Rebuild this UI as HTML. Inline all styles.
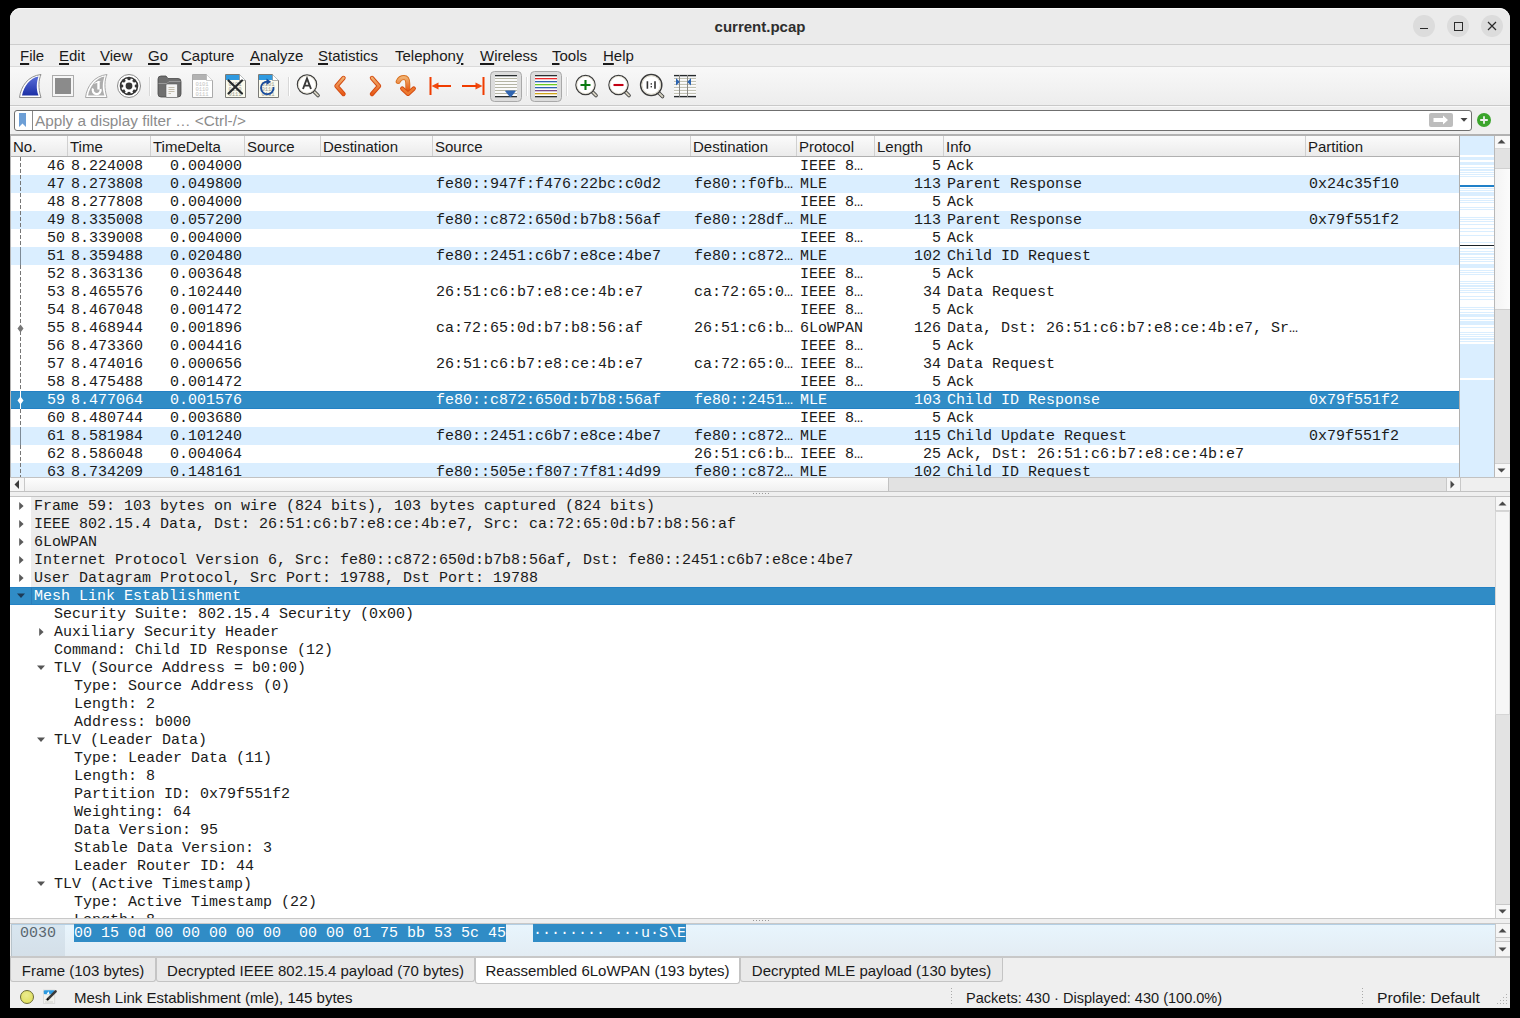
<!DOCTYPE html><html><head><meta charset='utf-8'><style>
*{box-sizing:border-box}
html,body{margin:0;padding:0}
body{width:1520px;height:1018px;background:#000;position:relative;overflow:hidden;font-family:"Liberation Sans",sans-serif;color:#1c1c1c}
.a{position:absolute}
.m{font-family:"Liberation Mono",monospace;font-size:15px;line-height:18px;white-space:pre;padding-top:1px}
.s{font-family:"Liberation Sans",sans-serif;font-size:15px;white-space:pre}
</style></head><body>
<div class='a' style='left:10px;top:8px;width:1500px;height:1000px;background:#efefef;border-radius:11px 11px 0 0;overflow:hidden'></div>
<div class='a' style='left:10px;top:8px;width:1500px;height:36px;background:#ebebeb;border-radius:11px 11px 0 0;border-top:1px solid #f8f8f8'></div>
<div class='a' style='left:10px;top:44px;width:1500px;height:1px;background:#cdcdcd'></div>
<div class='a s' style='left:10px;top:17px;width:1500px;text-align:center;font-weight:bold;font-size:15px;line-height:20px;color:#2e2e2e'>current.pcap</div>
<div class='a' style='left:1413px;top:15px;width:22px;height:22px;border-radius:50%;background:#dcdcdc'></div>
<div class='a' style='left:1447px;top:15px;width:22px;height:22px;border-radius:50%;background:#dcdcdc'></div>
<div class='a' style='left:1481px;top:15px;width:22px;height:22px;border-radius:50%;background:#dcdcdc'></div>
<div class='a' style='left:1420px;top:28px;width:8px;height:1.3px;background:#2a2a2a'></div>
<div class='a' style='left:1454px;top:22px;width:8.5px;height:8.5px;border:1.3px solid #2a2a2a'></div>
<svg class='a' style='left:1486px;top:20px' width='12' height='12'><path d='M2 2L10 10M10 2L2 10' stroke='#2a2a2a' stroke-width='1.2'/></svg>
<div class='a' style='left:10px;top:45px;width:1500px;height:21px;background:#efefef'></div>
<div class='a' style='left:10px;top:66px;width:1500px;height:1px;background:#dadada'></div>
<div class='a s' style='left:20px;top:46px;line-height:19px;color:#1a1a1a'><u style='text-decoration-thickness:2px;text-underline-offset:2px'>F</u>ile</div>
<div class='a s' style='left:59px;top:46px;line-height:19px;color:#1a1a1a'><u style='text-decoration-thickness:2px;text-underline-offset:2px'>E</u>dit</div>
<div class='a s' style='left:100px;top:46px;line-height:19px;color:#1a1a1a'><u style='text-decoration-thickness:2px;text-underline-offset:2px'>V</u>iew</div>
<div class='a s' style='left:148px;top:46px;line-height:19px;color:#1a1a1a'><u style='text-decoration-thickness:2px;text-underline-offset:2px'>G</u>o</div>
<div class='a s' style='left:181px;top:46px;line-height:19px;color:#1a1a1a'><u style='text-decoration-thickness:2px;text-underline-offset:2px'>C</u>apture</div>
<div class='a s' style='left:250px;top:46px;line-height:19px;color:#1a1a1a'><u style='text-decoration-thickness:2px;text-underline-offset:2px'>A</u>nalyze</div>
<div class='a s' style='left:318px;top:46px;line-height:19px;color:#1a1a1a'><u style='text-decoration-thickness:2px;text-underline-offset:2px'>S</u>tatistics</div>
<div class='a s' style='left:395px;top:46px;line-height:19px;color:#1a1a1a'>Telephon<u style='text-decoration-thickness:2px;text-underline-offset:2px'>y</u></div>
<div class='a s' style='left:480px;top:46px;line-height:19px;color:#1a1a1a'><u style='text-decoration-thickness:2px;text-underline-offset:2px'>W</u>ireless</div>
<div class='a s' style='left:552px;top:46px;line-height:19px;color:#1a1a1a'><u style='text-decoration-thickness:2px;text-underline-offset:2px'>T</u>ools</div>
<div class='a s' style='left:603px;top:46px;line-height:19px;color:#1a1a1a'><u style='text-decoration-thickness:2px;text-underline-offset:2px'>H</u>elp</div>
<div class='a' style='left:10px;top:67px;width:1500px;height:38px;background:linear-gradient(#f8f8f8,#ededed)'></div>
<div class='a' style='left:10px;top:105px;width:1500px;height:1px;background:#c9c9c9'></div>
<svg class='a' style='left:18px;top:73px;overflow:visible' width='24' height='26' viewBox='0 0 24 26'><defs>
<linearGradient id='gblue' x1='0' y1='0' x2='0' y2='1'><stop offset='0' stop-color='#5a6ed8'/><stop offset='1' stop-color='#1b2fa6'/></linearGradient>
<linearGradient id='gor' x1='0' y1='0' x2='0' y2='1'><stop offset='0' stop-color='#f0b070'/><stop offset='1' stop-color='#e85a18'/></linearGradient>
</defs><path d='M1.5 24.5 C3 13, 10 3, 23 1.5 C20.5 7, 20 15, 23 24.5 Z' fill='#fff' stroke='#8e8e8e' stroke-width='1'/><path d='M4 22.5 C6 13, 12 5, 20.5 3.5 C18.5 9, 18 16, 20.5 22.5 Z' fill='url(#gblue)'/></svg>
<svg class='a' style='left:52px;top:75px;overflow:visible' width='22' height='22' viewBox='0 0 22 22'><rect x='0.5' y='0.5' width='21' height='21' fill='#f6f6f6' stroke='#ababab'/><rect x='3' y='3' width='16' height='16' fill='#8b8b8b'/></svg>
<svg class='a' style='left:84px;top:73px;overflow:visible' width='24' height='26' viewBox='0 0 24 26'><path d='M1.5 24.5 C3 13, 10 3, 23 1.5 C20.5 7, 20 15, 23 24.5 Z' fill='#fff' stroke='#a8a8a8' stroke-width='1'/><path d='M4 22.5 C6 13, 12 5, 20.5 3.5 C18.5 9, 18 16, 20.5 22.5 Z' fill='#adadad'/><path d='M9 15.5 A4 4 0 1 0 16.5 16' fill='none' stroke='#fff' stroke-width='2.2'/><path d='M14.5 8 V16.5' stroke='#fff' stroke-width='2.4'/><path d='M9.5 11 L17.5 8.5 L12 9 Z' fill='#fff'/></svg>
<svg class='a' style='left:117px;top:74px;overflow:visible' width='24' height='24' viewBox='0 0 24 24'><circle cx='12' cy='12' r='11.5' fill='#fff' stroke='#8a8a8a' stroke-width='1'/><circle cx='12' cy='12' r='9.3' fill='#363636'/><circle cx='12' cy='12' r='5.9' fill='#fff'/><rect x='10.8' y='4.3' width='2.4' height='3' fill='#fff' transform='rotate(22.5 12 12)'/><rect x='10.8' y='4.3' width='2.4' height='3' fill='#fff' transform='rotate(67.5 12 12)'/><rect x='10.8' y='4.3' width='2.4' height='3' fill='#fff' transform='rotate(112.5 12 12)'/><rect x='10.8' y='4.3' width='2.4' height='3' fill='#fff' transform='rotate(157.5 12 12)'/><rect x='10.8' y='4.3' width='2.4' height='3' fill='#fff' transform='rotate(202.5 12 12)'/><rect x='10.8' y='4.3' width='2.4' height='3' fill='#fff' transform='rotate(247.5 12 12)'/><rect x='10.8' y='4.3' width='2.4' height='3' fill='#fff' transform='rotate(292.5 12 12)'/><rect x='10.8' y='4.3' width='2.4' height='3' fill='#fff' transform='rotate(337.5 12 12)'/><circle cx='12' cy='12' r='3.4' fill='#363636'/></svg>
<div class='a' style='left:149px;top:77px;width:1px;height:19px;background:#d8d8d8;box-shadow:1px 0 0 #fff'></div>
<svg class='a' style='left:157px;top:75px;overflow:visible' width='25' height='23' viewBox='0 0 25 23'><path d='M1 4 Q1 1 4 1 H9 L11 3.5 H21 Q24 3.5 24 6.5 V19 Q24 22 21 22 H4 Q1 22 1 19 Z' fill='#6f6f6f' stroke='#4a4a4a' stroke-width='0.8'/><path d='M1.5 8.5 H10 L12 6.5 H23.5' fill='none' stroke='#9a9a9a' stroke-width='1'/><rect x='9' y='9' width='11.5' height='13.5' rx='1' fill='#f4f4f4' stroke='#5a5a5a' stroke-width='0.6'/><path d='M11.5 12.5H17.5M11.5 14.5H17.5M11.5 16.5H17.5M11.5 18.5H14' stroke='#b8b09a' stroke-width='0.8'/></svg>
<svg class='a' style='left:192px;top:74px;overflow:visible' width='21' height='24' viewBox='0 0 21 24'><path d='M0.5 0.5 H14.5 L20.5 6.5 V23.5 H0.5 Z' fill='#fff' stroke='#aaa'/><path d='M1 1 H14.3 L19.5 6 H1 Z' fill='#b3b3b3'/><path d='M14.5 0.5 V6.5 H20.5' fill='#fff' stroke='#aaa' stroke-width='0.6'/><text x='10' y='11.5' font-family='Liberation Mono' font-size='5.5' text-anchor='middle' fill='#c4c4c4'>0101</text><text x='10' y='16.5' font-family='Liberation Mono' font-size='5.5' text-anchor='middle' fill='#c4c4c4'>0110</text><text x='10' y='21.5' font-family='Liberation Mono' font-size='5.5' text-anchor='middle' fill='#c4c4c4'>0111</text></svg>
<svg class='a' style='left:225px;top:74px;overflow:visible' width='21' height='24' viewBox='0 0 21 24'><path d='M0.5 0.5 H14.5 L20.5 6.5 V23.5 H0.5 Z' fill='#fbfbee' stroke='#7a7a76'/><path d='M1 1 H14.3 L19.5 6 H1 Z' fill='#2f9ae0'/><path d='M14.5 0.5 V6.5 H20.5' fill='#fff' stroke='#7a7a76' stroke-width='0.6'/><text x='10' y='11.5' font-family='Liberation Mono' font-size='5.5' text-anchor='middle' fill='#9a9a90'>0101</text><text x='10' y='16.5' font-family='Liberation Mono' font-size='5.5' text-anchor='middle' fill='#9a9a90'>0110</text><text x='10' y='21.5' font-family='Liberation Mono' font-size='5.5' text-anchor='middle' fill='#9a9a90'>0111</text><path d='M3.5 6.5 L17 19.5 M17 6.5 L3.5 19.5' stroke='#262a2c' stroke-width='2.2' stroke-linecap='round'/></svg>
<svg class='a' style='left:258px;top:74px;overflow:visible' width='21' height='24' viewBox='0 0 21 24'><path d='M0.5 0.5 H14.5 L20.5 6.5 V23.5 H0.5 Z' fill='#fbfbee' stroke='#7a7a76'/><path d='M1 1 H14.3 L19.5 6 H1 Z' fill='#2f9ae0'/><path d='M14.5 0.5 V6.5 H20.5' fill='#fff' stroke='#7a7a76' stroke-width='0.6'/><text x='10' y='11.5' font-family='Liberation Mono' font-size='5.5' text-anchor='middle' fill='#9a9a90'>0101</text><text x='10' y='16.5' font-family='Liberation Mono' font-size='5.5' text-anchor='middle' fill='#9a9a90'>0110</text><text x='10' y='21.5' font-family='Liberation Mono' font-size='5.5' text-anchor='middle' fill='#9a9a90'>0111</text><path d='M15.5 13 A6.3 6.3 0 1 1 9.5 7.6' fill='none' stroke='#1a4c9c' stroke-width='1.8'/><path d='M8.5 4.5 L13 7.8 L8.5 11 Z' fill='#1a4c9c'/></svg>
<div class='a' style='left:288px;top:77px;width:1px;height:19px;background:#d8d8d8;box-shadow:1px 0 0 #fff'></div>
<svg class='a' style='left:296px;top:73px;overflow:visible' width='25' height='25' viewBox='0 0 25 25'><path d='M15.5 16 L22 22.5' stroke='#3c3c3c' stroke-width='3.6' stroke-linecap='round'/><path d='M15.5 16 L22 22.5' stroke='#d4d0c0' stroke-width='1.8' stroke-linecap='round'/><circle cx='11' cy='11.5' r='9.6' fill='#fff' stroke='#3c3c3c' stroke-width='1.3'/><circle cx='11' cy='11.5' r='8.6' fill='none' stroke='#e0dccb' stroke-width='0.8'/><path d='M7 16 L11 5.5 L15 16 M8.3 12.6 H13.7' fill='none' stroke='#3a3a3a' stroke-width='1.9'/></svg>
<svg class='a' style='left:332px;top:75px;overflow:visible' width='16' height='22' viewBox='0 0 16 22'><path d='M11.5 3 L4.5 11 L11.5 19' fill='none' stroke='#d44a10' stroke-width='4.4' stroke-linecap='round' stroke-linejoin='round'/><path d='M11.5 3 L4.5 11 L11.5 19' fill='none' stroke='url(#gor)' stroke-width='2.6' stroke-linecap='round' stroke-linejoin='round'/></svg>
<svg class='a' style='left:367px;top:75px;overflow:visible' width='16' height='22' viewBox='0 0 16 22'><path d='M5 3 L12 11 L5 19' fill='none' stroke='#d44a10' stroke-width='4.4' stroke-linecap='round' stroke-linejoin='round'/><path d='M5 3 L12 11 L5 19' fill='none' stroke='url(#gor)' stroke-width='2.6' stroke-linecap='round' stroke-linejoin='round'/></svg>
<svg class='a' style='left:395px;top:74px;overflow:visible' width='23' height='23' viewBox='0 0 23 23'><path d='M3.2 7.5 Q5 3.6 9 3.6 Q12.8 3.6 12.8 10 V16' fill='none' stroke='#d8701e' stroke-width='5' stroke-linecap='round'/><path d='M3.2 7.5 Q5 3.6 9 3.6 Q12.8 3.6 12.8 10 V16' fill='none' stroke='url(#gor)' stroke-width='3.2' stroke-linecap='round'/><path d='M7.3 14.6 L13 19.8 L18.7 14.6' fill='none' stroke='#d44a10' stroke-width='4.4' stroke-linecap='round' stroke-linejoin='round'/><path d='M7.3 14.6 L13 19.8 L18.7 14.6' fill='none' stroke='#ec7a30' stroke-width='2.6' stroke-linecap='round' stroke-linejoin='round'/></svg>
<svg class='a' style='left:428px;top:76px;overflow:visible' width='26' height='20' viewBox='0 0 26 20'><rect x='1.5' y='1' width='2' height='18' fill='#f03c00'/><path d='M3.5 10 L10.5 6.5 V13.5 Z' fill='#f04a10'/><rect x='9' y='9' width='14' height='2' fill='#f03c00'/></svg>
<svg class='a' style='left:460px;top:76px;overflow:visible' width='26' height='20' viewBox='0 0 26 20'><rect x='22.5' y='1' width='2' height='18' fill='#f03c00'/><path d='M22.5 10 L15.5 6.5 V13.5 Z' fill='#f04a10'/><rect x='2' y='9' width='15' height='2' fill='#f03c00'/></svg>
<svg class='a' style='left:490px;top:71px;overflow:visible' width='32' height='31' viewBox='0 0 32 31'><rect x='0.5' y='0.5' width='31' height='30' rx='4' fill='#dcdcdc' stroke='#a9a9a9'/><rect x='5' y='4' width='22' height='22' fill='#fafafa'/><rect x='5' y='4' width='22' height='1.3' fill='#2a2e30'/><rect x='5' y='7' width='22' height='1' fill='#b4b4a4'/><rect x='5' y='10' width='22' height='1' fill='#b4b4a4'/><rect x='5' y='13' width='22' height='1' fill='#b4b4a4'/><rect x='5' y='16' width='22' height='1' fill='#b4b4a4'/><rect x='5' y='19' width='22' height='1' fill='#b4b4a4'/><rect x='5' y='22' width='22' height='1' fill='#b4b4a4'/><rect x='5' y='25' width='22' height='1.3' fill='#2a2e30'/><path d='M15 20 Q15 19.5 16 19.5 H25 Q26 19.5 25.5 20.5 L21.5 25.5 Q20.5 26.5 19.5 25.5 Z' fill='#2f64b0'/></svg>
<div class='a' style='left:526px;top:77px;width:1px;height:19px;background:#d8d8d8;box-shadow:1px 0 0 #fff'></div>
<svg class='a' style='left:530px;top:71px;overflow:visible' width='32' height='31' viewBox='0 0 32 31'><rect x='0.5' y='0.5' width='31' height='30' rx='4' fill='#dcdcdc' stroke='#a9a9a9'/><rect x='5' y='4' width='22' height='22' fill='#fcfcfc'/><rect x='5' y='4' width='22' height='1.3' fill='#2a2e30'/><rect x='5' y='7' width='22' height='1.3' fill='#e82828'/><rect x='5' y='10' width='22' height='1.3' fill='#3064b0'/><rect x='5' y='13' width='22' height='1.3' fill='#6ccc20'/><rect x='5' y='16' width='22' height='1.3' fill='#3064b0'/><rect x='5' y='19' width='22' height='1.3' fill='#7a4a88'/><rect x='5' y='22' width='22' height='1.3' fill='#d0a418'/><rect x='5' y='25' width='22' height='1.3' fill='#2a2e30'/></svg>
<div class='a' style='left:566px;top:77px;width:1px;height:19px;background:#d8d8d8;box-shadow:1px 0 0 #fff'></div>
<svg class='a' style='left:575px;top:74px;overflow:visible' width='24' height='25' viewBox='0 0 24 25'><path d='M16.0 16.5 L21.0 21.5' stroke='#3c3c3c' stroke-width='3.6' stroke-linecap='round'/><path d='M16.0 16.5 L21.0 21.5' stroke='#d4d0c0' stroke-width='1.8' stroke-linecap='round'/><circle cx='10.5' cy='11' r='9.6' fill='#fff' stroke='#3c3c3c' stroke-width='1.3'/><circle cx='10.5' cy='11' r='8.6' fill='none' stroke='#e0dccb' stroke-width='0.8'/><path d='M5.5 11 H15.5 M10.5 6 V16' stroke='#0a7a12' stroke-width='2.1'/></svg>
<svg class='a' style='left:608px;top:74px;overflow:visible' width='24' height='25' viewBox='0 0 24 25'><path d='M16.0 16.5 L21.0 21.5' stroke='#3c3c3c' stroke-width='3.6' stroke-linecap='round'/><path d='M16.0 16.5 L21.0 21.5' stroke='#d4d0c0' stroke-width='1.8' stroke-linecap='round'/><circle cx='10.5' cy='11' r='9.6' fill='#fff' stroke='#3c3c3c' stroke-width='1.3'/><circle cx='10.5' cy='11' r='8.6' fill='none' stroke='#e0dccb' stroke-width='0.8'/><path d='M5.5 11 H15.5' stroke='#c40012' stroke-width='2.1'/></svg>
<svg class='a' style='left:639px;top:73px;overflow:visible' width='26' height='26' viewBox='0 0 26 26'><path d='M18 18 L23.5 23.5' stroke='#3c3c3c' stroke-width='3.6' stroke-linecap='round'/><path d='M18 18 L23.5 23.5' stroke='#d4d0c0' stroke-width='1.8' stroke-linecap='round'/><circle cx='12.2' cy='12' r='10.6' fill='#fff' stroke='#3c3c3c' stroke-width='1.5'/><circle cx='12.2' cy='12' r='9.3' fill='none' stroke='#d8d4c4' stroke-width='1'/><path d='M8.4 8.2 V15.8 M16 8.2 V15.8' stroke='#333' stroke-width='1.6'/><rect x='11.6' y='10.2' width='1.4' height='1.4' fill='#333'/><rect x='11.6' y='13' width='1.4' height='1.4' fill='#333'/></svg>
<svg class='a' style='left:674px;top:74px;overflow:visible' width='22' height='24' viewBox='0 0 22 24'><rect x='0' y='1' width='22' height='22' fill='#fcfcfc'/><rect x='0' y='0.9' width='22' height='1.4' fill='#262a2c'/><rect x='0' y='3.9' width='22' height='1' fill='#bcbcac'/><rect x='0' y='6.9' width='22' height='1' fill='#bcbcac'/><rect x='0' y='9.9' width='22' height='1' fill='#bcbcac'/><rect x='0' y='12.9' width='22' height='1' fill='#bcbcac'/><rect x='0' y='15.9' width='22' height='1' fill='#bcbcac'/><rect x='0' y='18.9' width='22' height='1' fill='#bcbcac'/><rect x='0' y='21.9' width='22' height='1.4' fill='#262a2c'/><rect x='5' y='1' width='1' height='22' fill='#8a8a86'/><rect x='13' y='1' width='1' height='22' fill='#8a8a86'/><path d='M2 4 L5.8 8 L2 11.5 Z' fill='#2d64b0'/><path d='M17 4 L13.2 8 L17 11.5 Z' fill='#2d64b0'/></svg>
<div class='a' style='left:14px;top:110px;width:1458px;height:21px;background:#fff;border:1px solid #6f6f6f;border-radius:3px'></div>
<div class='a' style='left:32px;top:111px;width:1px;height:19px;background:#8a8a8a'></div>
<svg class='a' style='left:18px;top:113px' width='10' height='15'><path d='M1 0H8V14L4.5 10.5L1 14Z' fill='#6d9fd6'/></svg>
<div class='a s' style='left:35px;top:111px;line-height:19px;color:#8c8c8c;font-size:15.3px'>Apply a display filter … &lt;Ctrl-/&gt;</div>
<div class='a' style='left:1429px;top:113px;width:24px;height:14px;background:#bdbdbd;border-radius:2px'></div>
<svg class='a' style='left:1433px;top:114px' width='18' height='12'><path d='M0.5 4H10V1.5L15 6L10 10.5V8H0.5Z' fill='#fff'/></svg>
<svg class='a' style='left:1460px;top:118px' width='10' height='6'><path d='M0.5 0H7.5L4 3.8Z' fill='#444'/></svg>
<div class='a' style='left:1477px;top:113px;width:14px;height:14px;border-radius:50%;background:#3ba52c'></div>
<svg class='a' style='left:1477px;top:113px' width='14' height='14'><path d='M7 3.2V10.8M3.2 7H10.8' stroke='#f0f0f0' stroke-width='1.8'/></svg>
<div class='a' style='left:10px;top:134px;width:1500px;height:2px;background:#b2b2b2'></div>
<div class='a' style='left:10px;top:106px;width:1500px;height:1px;background:#f8f8f8'></div>
<div class='a' style='left:10px;top:136px;width:1450px;height:341px;background:#fff'></div>
<div class='a' style='left:10px;top:136px;width:1450px;height:20px;background:linear-gradient(#fbfbfb,#ebebeb)'></div>
<div class='a' style='left:10px;top:156px;width:1450px;height:1px;background:#b0b0b0'></div>
<div class='a s' style='left:13px;top:137px;line-height:19px;color:#1a1a1a'>No.</div>
<div class='a' style='left:67px;top:136px;width:1px;height:20px;background:#d0d0d0'></div>
<div class='a s' style='left:70px;top:137px;line-height:19px;color:#1a1a1a'>Time</div>
<div class='a' style='left:150px;top:136px;width:1px;height:20px;background:#d0d0d0'></div>
<div class='a s' style='left:153px;top:137px;line-height:19px;color:#1a1a1a'>TimeDelta</div>
<div class='a' style='left:244px;top:136px;width:1px;height:20px;background:#d0d0d0'></div>
<div class='a s' style='left:247px;top:137px;line-height:19px;color:#1a1a1a'>Source</div>
<div class='a' style='left:320px;top:136px;width:1px;height:20px;background:#d0d0d0'></div>
<div class='a s' style='left:323px;top:137px;line-height:19px;color:#1a1a1a'>Destination</div>
<div class='a' style='left:432px;top:136px;width:1px;height:20px;background:#d0d0d0'></div>
<div class='a s' style='left:435px;top:137px;line-height:19px;color:#1a1a1a'>Source</div>
<div class='a' style='left:690px;top:136px;width:1px;height:20px;background:#d0d0d0'></div>
<div class='a s' style='left:693px;top:137px;line-height:19px;color:#1a1a1a'>Destination</div>
<div class='a' style='left:796px;top:136px;width:1px;height:20px;background:#d0d0d0'></div>
<div class='a s' style='left:799px;top:137px;line-height:19px;color:#1a1a1a'>Protocol</div>
<div class='a' style='left:874px;top:136px;width:1px;height:20px;background:#d0d0d0'></div>
<div class='a s' style='left:877px;top:137px;line-height:19px;color:#1a1a1a'>Length</div>
<div class='a' style='left:943px;top:136px;width:1px;height:20px;background:#d0d0d0'></div>
<div class='a s' style='left:946px;top:137px;line-height:19px;color:#1a1a1a'>Info</div>
<div class='a' style='left:1305px;top:136px;width:1px;height:20px;background:#d0d0d0'></div>
<div class='a s' style='left:1308px;top:137px;line-height:19px;color:#1a1a1a'>Partition</div>
<div class='a' style='left:10px;top:157px;width:1450px;height:320px;overflow:hidden'>
<div class='a m' style='left:0px;top:0px;width:55px;text-align:right;color:#1a1a1a'>46</div>
<div class='a m' style='left:61px;top:0px;color:#1a1a1a'>8.224008</div>
<div class='a m' style='left:140px;top:0px;width:92px;text-align:right;color:#1a1a1a'>0.004000</div>
<div class='a m' style='left:790px;top:0px;color:#1a1a1a'>IEEE 8…</div>
<div class='a m' style='left:864px;top:0px;width:67px;text-align:right;color:#1a1a1a'>5</div>
<div class='a m' style='left:937px;top:0px;color:#1a1a1a'>Ack</div>
<div class='a' style='left:0;top:18px;width:1450px;height:18px;background:#daeeff;'></div>
<div class='a m' style='left:0px;top:18px;width:55px;text-align:right;color:#1a1a1a'>47</div>
<div class='a m' style='left:61px;top:18px;color:#1a1a1a'>8.273808</div>
<div class='a m' style='left:140px;top:18px;width:92px;text-align:right;color:#1a1a1a'>0.049800</div>
<div class='a m' style='left:426px;top:18px;color:#1a1a1a'>fe80::947f:f476:22bc:c0d2</div>
<div class='a m' style='left:684px;top:18px;color:#1a1a1a'>fe80::f0fb…</div>
<div class='a m' style='left:790px;top:18px;color:#1a1a1a'>MLE</div>
<div class='a m' style='left:864px;top:18px;width:67px;text-align:right;color:#1a1a1a'>113</div>
<div class='a m' style='left:937px;top:18px;color:#1a1a1a'>Parent Response</div>
<div class='a m' style='left:1299px;top:18px;color:#1a1a1a'>0x24c35f10</div>
<div class='a m' style='left:0px;top:36px;width:55px;text-align:right;color:#1a1a1a'>48</div>
<div class='a m' style='left:61px;top:36px;color:#1a1a1a'>8.277808</div>
<div class='a m' style='left:140px;top:36px;width:92px;text-align:right;color:#1a1a1a'>0.004000</div>
<div class='a m' style='left:790px;top:36px;color:#1a1a1a'>IEEE 8…</div>
<div class='a m' style='left:864px;top:36px;width:67px;text-align:right;color:#1a1a1a'>5</div>
<div class='a m' style='left:937px;top:36px;color:#1a1a1a'>Ack</div>
<div class='a' style='left:0;top:54px;width:1450px;height:18px;background:#daeeff;'></div>
<div class='a m' style='left:0px;top:54px;width:55px;text-align:right;color:#1a1a1a'>49</div>
<div class='a m' style='left:61px;top:54px;color:#1a1a1a'>8.335008</div>
<div class='a m' style='left:140px;top:54px;width:92px;text-align:right;color:#1a1a1a'>0.057200</div>
<div class='a m' style='left:426px;top:54px;color:#1a1a1a'>fe80::c872:650d:b7b8:56af</div>
<div class='a m' style='left:684px;top:54px;color:#1a1a1a'>fe80::28df…</div>
<div class='a m' style='left:790px;top:54px;color:#1a1a1a'>MLE</div>
<div class='a m' style='left:864px;top:54px;width:67px;text-align:right;color:#1a1a1a'>113</div>
<div class='a m' style='left:937px;top:54px;color:#1a1a1a'>Parent Response</div>
<div class='a m' style='left:1299px;top:54px;color:#1a1a1a'>0x79f551f2</div>
<div class='a m' style='left:0px;top:72px;width:55px;text-align:right;color:#1a1a1a'>50</div>
<div class='a m' style='left:61px;top:72px;color:#1a1a1a'>8.339008</div>
<div class='a m' style='left:140px;top:72px;width:92px;text-align:right;color:#1a1a1a'>0.004000</div>
<div class='a m' style='left:790px;top:72px;color:#1a1a1a'>IEEE 8…</div>
<div class='a m' style='left:864px;top:72px;width:67px;text-align:right;color:#1a1a1a'>5</div>
<div class='a m' style='left:937px;top:72px;color:#1a1a1a'>Ack</div>
<div class='a' style='left:0;top:90px;width:1450px;height:18px;background:#daeeff;'></div>
<div class='a m' style='left:0px;top:90px;width:55px;text-align:right;color:#1a1a1a'>51</div>
<div class='a m' style='left:61px;top:90px;color:#1a1a1a'>8.359488</div>
<div class='a m' style='left:140px;top:90px;width:92px;text-align:right;color:#1a1a1a'>0.020480</div>
<div class='a m' style='left:426px;top:90px;color:#1a1a1a'>fe80::2451:c6b7:e8ce:4be7</div>
<div class='a m' style='left:684px;top:90px;color:#1a1a1a'>fe80::c872…</div>
<div class='a m' style='left:790px;top:90px;color:#1a1a1a'>MLE</div>
<div class='a m' style='left:864px;top:90px;width:67px;text-align:right;color:#1a1a1a'>102</div>
<div class='a m' style='left:937px;top:90px;color:#1a1a1a'>Child ID Request</div>
<div class='a m' style='left:0px;top:108px;width:55px;text-align:right;color:#1a1a1a'>52</div>
<div class='a m' style='left:61px;top:108px;color:#1a1a1a'>8.363136</div>
<div class='a m' style='left:140px;top:108px;width:92px;text-align:right;color:#1a1a1a'>0.003648</div>
<div class='a m' style='left:790px;top:108px;color:#1a1a1a'>IEEE 8…</div>
<div class='a m' style='left:864px;top:108px;width:67px;text-align:right;color:#1a1a1a'>5</div>
<div class='a m' style='left:937px;top:108px;color:#1a1a1a'>Ack</div>
<div class='a m' style='left:0px;top:126px;width:55px;text-align:right;color:#1a1a1a'>53</div>
<div class='a m' style='left:61px;top:126px;color:#1a1a1a'>8.465576</div>
<div class='a m' style='left:140px;top:126px;width:92px;text-align:right;color:#1a1a1a'>0.102440</div>
<div class='a m' style='left:426px;top:126px;color:#1a1a1a'>26:51:c6:b7:e8:ce:4b:e7</div>
<div class='a m' style='left:684px;top:126px;color:#1a1a1a'>ca:72:65:0…</div>
<div class='a m' style='left:790px;top:126px;color:#1a1a1a'>IEEE 8…</div>
<div class='a m' style='left:864px;top:126px;width:67px;text-align:right;color:#1a1a1a'>34</div>
<div class='a m' style='left:937px;top:126px;color:#1a1a1a'>Data Request</div>
<div class='a m' style='left:0px;top:144px;width:55px;text-align:right;color:#1a1a1a'>54</div>
<div class='a m' style='left:61px;top:144px;color:#1a1a1a'>8.467048</div>
<div class='a m' style='left:140px;top:144px;width:92px;text-align:right;color:#1a1a1a'>0.001472</div>
<div class='a m' style='left:790px;top:144px;color:#1a1a1a'>IEEE 8…</div>
<div class='a m' style='left:864px;top:144px;width:67px;text-align:right;color:#1a1a1a'>5</div>
<div class='a m' style='left:937px;top:144px;color:#1a1a1a'>Ack</div>
<div class='a m' style='left:0px;top:162px;width:55px;text-align:right;color:#1a1a1a'>55</div>
<div class='a m' style='left:61px;top:162px;color:#1a1a1a'>8.468944</div>
<div class='a m' style='left:140px;top:162px;width:92px;text-align:right;color:#1a1a1a'>0.001896</div>
<div class='a m' style='left:426px;top:162px;color:#1a1a1a'>ca:72:65:0d:b7:b8:56:af</div>
<div class='a m' style='left:684px;top:162px;color:#1a1a1a'>26:51:c6:b…</div>
<div class='a m' style='left:790px;top:162px;color:#1a1a1a'>6LoWPAN</div>
<div class='a m' style='left:864px;top:162px;width:67px;text-align:right;color:#1a1a1a'>126</div>
<div class='a m' style='left:937px;top:162px;color:#1a1a1a'>Data, Dst: 26:51:c6:b7:e8:ce:4b:e7, Sr…</div>
<div class='a m' style='left:0px;top:180px;width:55px;text-align:right;color:#1a1a1a'>56</div>
<div class='a m' style='left:61px;top:180px;color:#1a1a1a'>8.473360</div>
<div class='a m' style='left:140px;top:180px;width:92px;text-align:right;color:#1a1a1a'>0.004416</div>
<div class='a m' style='left:790px;top:180px;color:#1a1a1a'>IEEE 8…</div>
<div class='a m' style='left:864px;top:180px;width:67px;text-align:right;color:#1a1a1a'>5</div>
<div class='a m' style='left:937px;top:180px;color:#1a1a1a'>Ack</div>
<div class='a m' style='left:0px;top:198px;width:55px;text-align:right;color:#1a1a1a'>57</div>
<div class='a m' style='left:61px;top:198px;color:#1a1a1a'>8.474016</div>
<div class='a m' style='left:140px;top:198px;width:92px;text-align:right;color:#1a1a1a'>0.000656</div>
<div class='a m' style='left:426px;top:198px;color:#1a1a1a'>26:51:c6:b7:e8:ce:4b:e7</div>
<div class='a m' style='left:684px;top:198px;color:#1a1a1a'>ca:72:65:0…</div>
<div class='a m' style='left:790px;top:198px;color:#1a1a1a'>IEEE 8…</div>
<div class='a m' style='left:864px;top:198px;width:67px;text-align:right;color:#1a1a1a'>34</div>
<div class='a m' style='left:937px;top:198px;color:#1a1a1a'>Data Request</div>
<div class='a m' style='left:0px;top:216px;width:55px;text-align:right;color:#1a1a1a'>58</div>
<div class='a m' style='left:61px;top:216px;color:#1a1a1a'>8.475488</div>
<div class='a m' style='left:140px;top:216px;width:92px;text-align:right;color:#1a1a1a'>0.001472</div>
<div class='a m' style='left:790px;top:216px;color:#1a1a1a'>IEEE 8…</div>
<div class='a m' style='left:864px;top:216px;width:67px;text-align:right;color:#1a1a1a'>5</div>
<div class='a m' style='left:937px;top:216px;color:#1a1a1a'>Ack</div>
<div class='a' style='left:0;top:234px;width:1450px;height:18px;background:#308cc6;border-top:1px solid #2381c4;border-bottom:1px solid #2381c4;'></div>
<div class='a m' style='left:0px;top:234px;width:55px;text-align:right;color:#fff'>59</div>
<div class='a m' style='left:61px;top:234px;color:#fff'>8.477064</div>
<div class='a m' style='left:140px;top:234px;width:92px;text-align:right;color:#fff'>0.001576</div>
<div class='a m' style='left:426px;top:234px;color:#fff'>fe80::c872:650d:b7b8:56af</div>
<div class='a m' style='left:684px;top:234px;color:#fff'>fe80::2451…</div>
<div class='a m' style='left:790px;top:234px;color:#fff'>MLE</div>
<div class='a m' style='left:864px;top:234px;width:67px;text-align:right;color:#fff'>103</div>
<div class='a m' style='left:937px;top:234px;color:#fff'>Child ID Response</div>
<div class='a m' style='left:1299px;top:234px;color:#fff'>0x79f551f2</div>
<div class='a m' style='left:0px;top:252px;width:55px;text-align:right;color:#1a1a1a'>60</div>
<div class='a m' style='left:61px;top:252px;color:#1a1a1a'>8.480744</div>
<div class='a m' style='left:140px;top:252px;width:92px;text-align:right;color:#1a1a1a'>0.003680</div>
<div class='a m' style='left:790px;top:252px;color:#1a1a1a'>IEEE 8…</div>
<div class='a m' style='left:864px;top:252px;width:67px;text-align:right;color:#1a1a1a'>5</div>
<div class='a m' style='left:937px;top:252px;color:#1a1a1a'>Ack</div>
<div class='a' style='left:0;top:270px;width:1450px;height:18px;background:#daeeff;'></div>
<div class='a m' style='left:0px;top:270px;width:55px;text-align:right;color:#1a1a1a'>61</div>
<div class='a m' style='left:61px;top:270px;color:#1a1a1a'>8.581984</div>
<div class='a m' style='left:140px;top:270px;width:92px;text-align:right;color:#1a1a1a'>0.101240</div>
<div class='a m' style='left:426px;top:270px;color:#1a1a1a'>fe80::2451:c6b7:e8ce:4be7</div>
<div class='a m' style='left:684px;top:270px;color:#1a1a1a'>fe80::c872…</div>
<div class='a m' style='left:790px;top:270px;color:#1a1a1a'>MLE</div>
<div class='a m' style='left:864px;top:270px;width:67px;text-align:right;color:#1a1a1a'>115</div>
<div class='a m' style='left:937px;top:270px;color:#1a1a1a'>Child Update Request</div>
<div class='a m' style='left:1299px;top:270px;color:#1a1a1a'>0x79f551f2</div>
<div class='a m' style='left:0px;top:288px;width:55px;text-align:right;color:#1a1a1a'>62</div>
<div class='a m' style='left:61px;top:288px;color:#1a1a1a'>8.586048</div>
<div class='a m' style='left:140px;top:288px;width:92px;text-align:right;color:#1a1a1a'>0.004064</div>
<div class='a m' style='left:684px;top:288px;color:#1a1a1a'>26:51:c6:b…</div>
<div class='a m' style='left:790px;top:288px;color:#1a1a1a'>IEEE 8…</div>
<div class='a m' style='left:864px;top:288px;width:67px;text-align:right;color:#1a1a1a'>25</div>
<div class='a m' style='left:937px;top:288px;color:#1a1a1a'>Ack, Dst: 26:51:c6:b7:e8:ce:4b:e7</div>
<div class='a' style='left:0;top:306px;width:1450px;height:18px;background:#daeeff;'></div>
<div class='a m' style='left:0px;top:306px;width:55px;text-align:right;color:#1a1a1a'>63</div>
<div class='a m' style='left:61px;top:306px;color:#1a1a1a'>8.734209</div>
<div class='a m' style='left:140px;top:306px;width:92px;text-align:right;color:#1a1a1a'>0.148161</div>
<div class='a m' style='left:426px;top:306px;color:#1a1a1a'>fe80::505e:f807:7f81:4d99</div>
<div class='a m' style='left:684px;top:306px;color:#1a1a1a'>fe80::c872…</div>
<div class='a m' style='left:790px;top:306px;color:#1a1a1a'>MLE</div>
<div class='a m' style='left:864px;top:306px;width:67px;text-align:right;color:#1a1a1a'>102</div>
<div class='a m' style='left:937px;top:306px;color:#1a1a1a'>Child ID Request</div>
</div>
<div class='a' style='left:10px;top:136px;width:1px;height:341px;background:#b4b4b4'></div>
<div class='a' style='left:20px;top:157px;width:1px;height:320px;background:repeating-linear-gradient(#767676 0 4px,transparent 4px 6px)'></div>
<div class='a' style='left:20px;top:247px;width:1px;height:18px;background:#7d8a96'></div>
<div class='a' style='left:20px;top:427px;width:1px;height:18px;background:#7d8a96'></div>
<svg class='a' style='left:16px;top:324px' width='9' height='9'><path d='M4.5 0.5L7.5 4.5L4.5 8.5L1.5 4.5Z' fill='#777'/></svg>
<div class='a' style='left:20px;top:391px;width:1px;height:18px;background:#fff'></div>
<svg class='a' style='left:16px;top:396px' width='9' height='9'><path d='M4.5 0.5L7.5 4.5L4.5 8.5L1.5 4.5Z' fill='#fff'/></svg>
<div class='a' style='left:1459px;top:136px;width:36px;height:341px;background:#fff;border-left:1px solid #b0b0b0;border-right:1px solid #b8b8b8'></div>
<div class='a' style='left:1460px;top:136px;width:34px;height:19px;background:#daeeff'></div>
<div class='a' style='left:1460px;top:156.5px;width:34px;height:3.5px;background:#daeeff'></div>
<div class='a' style='left:1460px;top:161.5px;width:34px;height:3.5px;background:#daeeff'></div>
<div class='a' style='left:1460px;top:166.5px;width:34px;height:1.5px;background:#daeeff'></div>
<div class='a' style='left:1460px;top:168.5px;width:34px;height:2.5px;background:#daeeff'></div>
<div class='a' style='left:1460px;top:172px;width:34px;height:1px;background:#daeeff'></div>
<div class='a' style='left:1460px;top:174px;width:34px;height:1px;background:#daeeff'></div>
<div class='a' style='left:1460px;top:176px;width:34px;height:1px;background:#daeeff'></div>
<div class='a' style='left:1460px;top:187.5px;width:34px;height:1.0px;background:#daeeff'></div>
<div class='a' style='left:1460px;top:189.5px;width:34px;height:1.0px;background:#daeeff'></div>
<div class='a' style='left:1460px;top:192px;width:34px;height:4px;background:#daeeff'></div>
<div class='a' style='left:1460px;top:197.5px;width:34px;height:1.0px;background:#daeeff'></div>
<div class='a' style='left:1460px;top:199.5px;width:34px;height:1.5px;background:#daeeff'></div>
<div class='a' style='left:1460px;top:202px;width:34px;height:1px;background:#daeeff'></div>
<div class='a' style='left:1460px;top:206.5px;width:34px;height:1.0px;background:#daeeff'></div>
<div class='a' style='left:1460px;top:208.5px;width:34px;height:1.0px;background:#daeeff'></div>
<div class='a' style='left:1460px;top:216.5px;width:34px;height:1.0px;background:#daeeff'></div>
<div class='a' style='left:1460px;top:218.5px;width:34px;height:1.0px;background:#daeeff'></div>
<div class='a' style='left:1460px;top:220.5px;width:34px;height:1.0px;background:#daeeff'></div>
<div class='a' style='left:1460px;top:224px;width:34px;height:1px;background:#daeeff'></div>
<div class='a' style='left:1460px;top:227.5px;width:34px;height:1.5px;background:#daeeff'></div>
<div class='a' style='left:1460px;top:230.5px;width:34px;height:1.0px;background:#daeeff'></div>
<div class='a' style='left:1460px;top:234.5px;width:34px;height:1.0px;background:#daeeff'></div>
<div class='a' style='left:1460px;top:241.5px;width:34px;height:1.0px;background:#daeeff'></div>
<div class='a' style='left:1460px;top:248px;width:34px;height:1px;background:#daeeff'></div>
<div class='a' style='left:1460px;top:250.5px;width:34px;height:1.0px;background:#daeeff'></div>
<div class='a' style='left:1460px;top:252.5px;width:34px;height:2.0px;background:#daeeff'></div>
<div class='a' style='left:1460px;top:257px;width:34px;height:1px;background:#daeeff'></div>
<div class='a' style='left:1460px;top:259px;width:34px;height:1px;background:#daeeff'></div>
<div class='a' style='left:1460px;top:261px;width:34px;height:1px;background:#daeeff'></div>
<div class='a' style='left:1460px;top:264px;width:34px;height:4px;background:#daeeff'></div>
<div class='a' style='left:1460px;top:269.5px;width:34px;height:1.0px;background:#daeeff'></div>
<div class='a' style='left:1460px;top:271.5px;width:34px;height:1.0px;background:#daeeff'></div>
<div class='a' style='left:1460px;top:273.5px;width:34px;height:1.0px;background:#daeeff'></div>
<div class='a' style='left:1460px;top:280.5px;width:34px;height:1.0px;background:#daeeff'></div>
<div class='a' style='left:1460px;top:282.5px;width:34px;height:1.0px;background:#daeeff'></div>
<div class='a' style='left:1460px;top:284.5px;width:34px;height:2.0px;background:#daeeff'></div>
<div class='a' style='left:1460px;top:287.5px;width:34px;height:1.0px;background:#daeeff'></div>
<div class='a' style='left:1460px;top:289.5px;width:34px;height:1.0px;background:#daeeff'></div>
<div class='a' style='left:1460px;top:291.5px;width:34px;height:1.0px;background:#daeeff'></div>
<div class='a' style='left:1460px;top:295.5px;width:34px;height:1.0px;background:#daeeff'></div>
<div class='a' style='left:1460px;top:298.5px;width:34px;height:1.5px;background:#daeeff'></div>
<div class='a' style='left:1460px;top:307px;width:34px;height:1px;background:#daeeff'></div>
<div class='a' style='left:1460px;top:309px;width:34px;height:1px;background:#daeeff'></div>
<div class='a' style='left:1460px;top:311.5px;width:34px;height:1.0px;background:#daeeff'></div>
<div class='a' style='left:1460px;top:314px;width:34px;height:3px;background:#daeeff'></div>
<div class='a' style='left:1460px;top:318.5px;width:34px;height:1.0px;background:#daeeff'></div>
<div class='a' style='left:1460px;top:320.5px;width:34px;height:1.0px;background:#daeeff'></div>
<div class='a' style='left:1460px;top:322px;width:34px;height:3px;background:#daeeff'></div>
<div class='a' style='left:1460px;top:326.5px;width:34px;height:1.0px;background:#daeeff'></div>
<div class='a' style='left:1460px;top:331.5px;width:34px;height:1.0px;background:#daeeff'></div>
<div class='a' style='left:1460px;top:333.5px;width:34px;height:1.0px;background:#daeeff'></div>
<div class='a' style='left:1460px;top:335.5px;width:34px;height:1.0px;background:#daeeff'></div>
<div class='a' style='left:1460px;top:337.5px;width:34px;height:2.5px;background:#daeeff'></div>
<div class='a' style='left:1460px;top:341px;width:34px;height:1px;background:#daeeff'></div>
<div class='a' style='left:1460px;top:343.5px;width:34px;height:1.0px;background:#daeeff'></div>
<div class='a' style='left:1460px;top:345px;width:34px;height:33px;background:#daeeff'></div>
<div class='a' style='left:1460px;top:380px;width:34px;height:97px;background:#daeeff'></div>
<div class='a' style='left:1460px;top:185px;width:34px;height:2px;background:#2080c8'></div>
<div class='a' style='left:1460px;top:245px;width:34px;height:1px;background:#1a2228'></div>
<div class='a' style='left:1495px;top:136px;width:15px;height:341px;background:#e2e2e2'></div>
<div class='a' style='left:1495px;top:136px;width:15px;height:13px;background:#f8f8f8;border-bottom:1px solid #d8d8d8'></div>
<div class='a' style='left:1495px;top:168px;width:15px;height:142px;background:linear-gradient(90deg,#f4f4f4,#fbfbfb);border-top:1px solid #d0d0d0;border-bottom:1px solid #d0d0d0'></div>
<div class='a' style='left:1495px;top:463px;width:15px;height:14px;background:#f8f8f8;border-top:1px solid #d0d0d0'></div>
<svg class='a' style='left:1497px;top:139px' width='9' height='6'><path d='M0.5 4.5H8.5L4.5 0.5Z' fill='#4a4a4a'/></svg>
<svg class='a' style='left:1497px;top:468px' width='9' height='6'><path d='M0.5 0.5H8.5L4.5 4.5Z' fill='#4a4a4a'/></svg>
<div class='a' style='left:10px;top:477px;width:1500px;height:15px;background:#e2e2e2;border-top:1px solid #c2c2c2;border-bottom:1px solid #c2c2c2'></div>
<div class='a' style='left:24px;top:478px;width:865px;height:13px;background:linear-gradient(#fdfdfd,#f0f0f0);border-left:1px solid #c8c8c8;border-right:1px solid #c2c2c2'></div>
<div class='a' style='left:10px;top:478px;width:14px;height:13px;background:#f6f6f6'></div>
<div class='a' style='left:1446px;top:478px;width:14px;height:13px;background:#f6f6f6;border-left:1px solid #c8c8c8'></div>
<svg class='a' style='left:14px;top:480px' width='6' height='9'><path d='M5 0V9L0.5 4.5Z' fill='#3c3c3c'/></svg>
<svg class='a' style='left:1450px;top:480px' width='6' height='9'><path d='M0.5 0.5V8.5L4.5 4.5Z' fill='#4a4a4a'/></svg>
<div class='a' style='left:1460px;top:478px;width:50px;height:13px;background:#efefef;border-left:1px solid #c8c8c8'></div>
<div class='a' style='left:10px;top:496px;width:1500px;height:1px;background:#c4c4c4'></div>
<div class='a' style='left:753px;top:493px;width:16px;height:1px;background:repeating-linear-gradient(90deg,#999 0 1px,transparent 1px 3px)'></div>
<div class='a' style='left:10px;top:497px;width:1485px;height:422px;background:#fff;overflow:hidden'>
<div class='a' style='left:21px;top:0px;width:1464px;height:18px;background:#ececec'></div>
<svg class='a' style='left:9px;top:5px' width='6' height='9'><path d='M0.2 0V8L4.6 4Z' fill='#5a5a5a'/></svg>
<div class='a m' style='left:24px;top:0px;color:#1a1a1a'>Frame 59: 103 bytes on wire (824 bits), 103 bytes captured (824 bits)</div>
<div class='a' style='left:21px;top:18px;width:1464px;height:18px;background:#ececec'></div>
<svg class='a' style='left:9px;top:23px' width='6' height='9'><path d='M0.2 0V8L4.6 4Z' fill='#5a5a5a'/></svg>
<div class='a m' style='left:24px;top:18px;color:#1a1a1a'>IEEE 802.15.4 Data, Dst: 26:51:c6:b7:e8:ce:4b:e7, Src: ca:72:65:0d:b7:b8:56:af</div>
<div class='a' style='left:21px;top:36px;width:1464px;height:18px;background:#ececec'></div>
<svg class='a' style='left:9px;top:41px' width='6' height='9'><path d='M0.2 0V8L4.6 4Z' fill='#5a5a5a'/></svg>
<div class='a m' style='left:24px;top:36px;color:#1a1a1a'>6LoWPAN</div>
<div class='a' style='left:21px;top:54px;width:1464px;height:18px;background:#ececec'></div>
<svg class='a' style='left:9px;top:59px' width='6' height='9'><path d='M0.2 0V8L4.6 4Z' fill='#5a5a5a'/></svg>
<div class='a m' style='left:24px;top:54px;color:#1a1a1a'>Internet Protocol Version 6, Src: fe80::c872:650d:b7b8:56af, Dst: fe80::2451:c6b7:e8ce:4be7</div>
<div class='a' style='left:21px;top:72px;width:1464px;height:18px;background:#ececec'></div>
<svg class='a' style='left:9px;top:77px' width='6' height='9'><path d='M0.2 0V8L4.6 4Z' fill='#5a5a5a'/></svg>
<div class='a m' style='left:24px;top:72px;color:#1a1a1a'>User Datagram Protocol, Src Port: 19788, Dst Port: 19788</div>
<div class='a' style='left:0;top:90px;width:1485px;height:18px;background:#308cc6;border-top:1px solid #2381c4;border-bottom:1px solid #2381c4'></div>
<div class='a' style='left:21px;top:90px;width:1px;height:18px;background:#2a7dbb'></div>
<svg class='a' style='left:7px;top:96px' width='10' height='6'><path d='M0 0.6H8L4 5Z' fill='#1d3a55'/></svg>
<div class='a m' style='left:24px;top:90px;color:#fff'>Mesh Link Establishment</div>
<div class='a m' style='left:44px;top:108px;color:#1a1a1a'>Security Suite: 802.15.4 Security (0x00)</div>
<svg class='a' style='left:29px;top:131px' width='6' height='9'><path d='M0.2 0V8L4.6 4Z' fill='#5a5a5a'/></svg>
<div class='a m' style='left:44px;top:126px;color:#1a1a1a'>Auxiliary Security Header</div>
<div class='a m' style='left:44px;top:144px;color:#1a1a1a'>Command: Child ID Response (12)</div>
<svg class='a' style='left:27px;top:168px' width='10' height='6'><path d='M0 0.6H8L4 5Z' fill='#555'/></svg>
<div class='a m' style='left:44px;top:162px;color:#1a1a1a'>TLV (Source Address = b0:00)</div>
<div class='a m' style='left:64px;top:180px;color:#1a1a1a'>Type: Source Address (0)</div>
<div class='a m' style='left:64px;top:198px;color:#1a1a1a'>Length: 2</div>
<div class='a m' style='left:64px;top:216px;color:#1a1a1a'>Address: b000</div>
<svg class='a' style='left:27px;top:240px' width='10' height='6'><path d='M0 0.6H8L4 5Z' fill='#555'/></svg>
<div class='a m' style='left:44px;top:234px;color:#1a1a1a'>TLV (Leader Data)</div>
<div class='a m' style='left:64px;top:252px;color:#1a1a1a'>Type: Leader Data (11)</div>
<div class='a m' style='left:64px;top:270px;color:#1a1a1a'>Length: 8</div>
<div class='a m' style='left:64px;top:288px;color:#1a1a1a'>Partition ID: 0x79f551f2</div>
<div class='a m' style='left:64px;top:306px;color:#1a1a1a'>Weighting: 64</div>
<div class='a m' style='left:64px;top:324px;color:#1a1a1a'>Data Version: 95</div>
<div class='a m' style='left:64px;top:342px;color:#1a1a1a'>Stable Data Version: 3</div>
<div class='a m' style='left:64px;top:360px;color:#1a1a1a'>Leader Router ID: 44</div>
<svg class='a' style='left:27px;top:384px' width='10' height='6'><path d='M0 0.6H8L4 5Z' fill='#555'/></svg>
<div class='a m' style='left:44px;top:378px;color:#1a1a1a'>TLV (Active Timestamp)</div>
<div class='a m' style='left:64px;top:396px;color:#1a1a1a'>Type: Active Timestamp (22)</div>
<div class='a m' style='left:64px;top:414px;color:#1a1a1a'>Length: 8</div>
</div>
<div class='a' style='left:1495px;top:497px;width:15px;height:422px;background:#e3e3e3;border-left:1px solid #cfcfcf'></div>
<div class='a' style='left:1496px;top:497px;width:14px;height:14px;background:#f7f7f7;border-bottom:1px solid #d4d4d4'></div>
<div class='a' style='left:1495px;top:511px;width:15px;height:204px;background:#f6f6f6;border:1px solid #d6d6d6'></div>
<div class='a' style='left:1496px;top:904px;width:14px;height:14px;background:#f7f7f7;border-top:1px solid #c8c8c8'></div>
<svg class='a' style='left:1498px;top:501px' width='9' height='6'><path d='M0.5 4.5H8.5L4.5 0.5Z' fill='#4a4a4a'/></svg>
<svg class='a' style='left:1498px;top:909px' width='9' height='6'><path d='M0.5 0.5H8.5L4.5 4.5Z' fill='#4a4a4a'/></svg>
<div class='a' style='left:10px;top:918px;width:1500px;height:1px;background:#c8c8c8'></div>
<div class='a' style='left:10px;top:923px;width:1500px;height:1px;background:#c8c8c8'></div>
<div class='a' style='left:753px;top:920px;width:16px;height:1px;background:repeating-linear-gradient(90deg,#999 0 1px,transparent 1px 3px)'></div>
<div class='a' style='left:11px;top:924px;width:1484px;height:33px;background:linear-gradient(#e8f5fd,#e3ecf3);border-left:1px solid #b8c4cc;border-top:1px solid #b4cfe4'></div>
<div class='a' style='left:12px;top:925px;width:53px;height:32px;background:linear-gradient(#d8e6f0,#d4dfe8)'></div>
<div class='a m' style='left:20px;top:924px;color:#5a6670'>0030</div>
<div class='a' style='left:74px;top:924px;width:432px;height:18px;background:#308cc6'></div>
<div class='a m' style='left:74px;top:924px;color:#fff'>00 15 0d 00 00 00 00 00  00 00 01 75 bb 53 5c 45</div>
<div class='a' style='left:533px;top:924px;width:153px;height:18px;background:#308cc6'></div>
<div class='a m' style='left:533px;top:924px;color:#fff'>········ ···u·S\E</div>
<div class='a' style='left:1495px;top:924px;width:15px;height:33px;background:#f5f5f5;border-left:1px solid #c8c8c8'></div>
<div class='a' style='left:1496px;top:937px;width:14px;height:5px;background:#efefef;border-top:1px solid #c8c8c8;border-bottom:1px solid #c8c8c8'></div>
<svg class='a' style='left:1498px;top:928px' width='9' height='6'><path d='M0.5 4.5H8.5L4.5 0.5Z' fill='#4a4a4a'/></svg>
<svg class='a' style='left:1498px;top:947px' width='9' height='6'><path d='M0.5 0.5H8.5L4.5 4.5Z' fill='#4a4a4a'/></svg>
<div class='a' style='left:10px;top:956px;width:1500px;height:2px;background:#c8c8c8'></div>
<div class='a' style='left:10px;top:958px;width:146px;height:24px;background:#e9e9e9;border:1px solid #c4c4c4;border-top:none;border-radius:0 0 3px 3px'></div>
<div class='a s' style='left:10px;top:961px;width:146px;text-align:center;line-height:20px;color:#1a1a1a'>Frame (103 bytes)</div>
<div class='a' style='left:156px;top:958px;width:319px;height:24px;background:#e9e9e9;border:1px solid #c4c4c4;border-top:none;border-radius:0 0 3px 3px'></div>
<div class='a s' style='left:156px;top:961px;width:319px;text-align:center;line-height:20px;color:#1a1a1a'>Decrypted IEEE 802.15.4 payload (70 bytes)</div>
<div class='a' style='left:475px;top:958px;width:265px;height:26px;background:#ffffff;border:1px solid #c4c4c4;border-top:none;border-radius:0 0 3px 3px'></div>
<div class='a s' style='left:475px;top:961px;width:265px;text-align:center;line-height:20px;color:#1a1a1a'>Reassembled 6LoWPAN (193 bytes)</div>
<div class='a' style='left:740px;top:958px;width:263px;height:24px;background:#e9e9e9;border:1px solid #c4c4c4;border-top:none;border-radius:0 0 3px 3px'></div>
<div class='a s' style='left:740px;top:961px;width:263px;text-align:center;line-height:20px;color:#1a1a1a'>Decrypted MLE payload (130 bytes)</div>
<div class='a' style='left:20px;top:990px;width:14px;height:14px;border-radius:50%;background:radial-gradient(circle at 45% 35%,#ecec90,#dcdc50);border:1px solid #6a6a34'></div>
<svg class='a' style='left:43px;top:989px' width='15' height='15'><rect x='0.6' y='1' width='11.2' height='13.4' fill='#f2f2ee' stroke='#cfcfcf' stroke-width='0.6'/><rect x='0.8' y='1.2' width='10.8' height='4' rx='1' fill='#2c9ae0'/><path d='M3.5 5.2L5.5 2.2L6.5 5.2Z' fill='#fff'/><path d='M2 10.5H5M2 13H10' stroke='#c8c8c0' stroke-width='0.8'/><path d='M4.6 10.4L12.6 2.4' stroke='#3a3a3a' stroke-width='2.6' stroke-linecap='round'/><path d='M4.2 10.8L5.2 9.8' stroke='#000' stroke-width='1.6'/></svg>
<div class='a s' style='left:74px;top:988px;line-height:20px;color:#1a1a1a'>Mesh Link Establishment (mle), 145 bytes</div>
<div class='a' style='left:951px;top:988px;width:1px;height:18px;background:repeating-linear-gradient(#aaa 0 1px,transparent 1px 3px)'></div>
<div class='a s' style='left:966px;top:988px;line-height:20px;color:#1a1a1a;transform:scaleX(0.969);transform-origin:0 0'>Packets: 430 · Displayed: 430 (100.0%)</div>
<div class='a' style='left:1362px;top:988px;width:1px;height:18px;background:repeating-linear-gradient(#aaa 0 1px,transparent 1px 3px)'></div>
<div class='a s' style='left:1377px;top:988px;line-height:20px;color:#1a1a1a;transform:scaleX(1.045);transform-origin:0 0'>Profile: Default</div>
<div class='a' style='left:1506px;top:994px;width:1px;height:1px;background:#b0b0b0'></div>
<div class='a' style='left:1503px;top:997px;width:1px;height:1px;background:#b0b0b0'></div>
<div class='a' style='left:1506px;top:997px;width:1px;height:1px;background:#b0b0b0'></div>
<div class='a' style='left:1500px;top:1000px;width:1px;height:1px;background:#b0b0b0'></div>
<div class='a' style='left:1503px;top:1000px;width:1px;height:1px;background:#b0b0b0'></div>
<div class='a' style='left:1506px;top:1000px;width:1px;height:1px;background:#b0b0b0'></div>
<div class='a' style='left:1497px;top:1003px;width:1px;height:1px;background:#b0b0b0'></div>
<div class='a' style='left:1500px;top:1003px;width:1px;height:1px;background:#b0b0b0'></div>
<div class='a' style='left:1503px;top:1003px;width:1px;height:1px;background:#b0b0b0'></div>
<div class='a' style='left:1506px;top:1003px;width:1px;height:1px;background:#b0b0b0'></div>
</body></html>
